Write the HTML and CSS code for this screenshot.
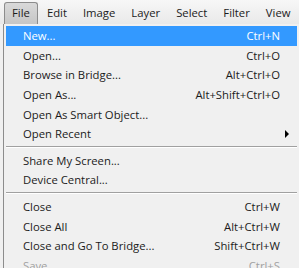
FILE: index.html
```html
<!DOCTYPE html>
<html lang="en">
<head>
    <meta charset="UTF-8">
    <title>File menu</title>
    <link rel="stylesheet" href="styles.css">
</head>
<body>
    <nav class="menubar">
        <span class="menu-title active">File</span>
        <span class="menu-title">Edit</span>
        <span class="menu-title">Image</span>
        <span class="menu-title">Layer</span>
        <span class="menu-title">Select</span>
        <span class="menu-title">Filter</span>
        <span class="menu-title">View</span>
    </nav>
    <ul class="dropdown">
        <li class="item selected"><span>New...</span><span class="key">Ctrl+N</span></li>
        <li class="item"><span>Open...</span><span class="key">Ctrl+O</span></li>
        <li class="item"><span>Browse in Bridge...</span><span class="key">Alt+Ctrl+O</span></li>
        <li class="item"><span>Open As...</span><span class="key">Alt+Shift+Ctrl+O</span></li>
        <li class="item"><span>Open As Smart Object...</span><span class="key"></span></li>
        <li class="item submenu"><span>Open Recent</span><span class="key"></span></li>
        <li class="separator"></li>
        <li class="item"><span>Share My Screen...</span><span class="key"></span></li>
        <li class="item"><span>Device Central...</span><span class="key"></span></li>
        <li class="separator"></li>
        <li class="item"><span>Close</span><span class="key">Ctrl+W</span></li>
        <li class="item"><span>Close All</span><span class="key">Alt+Ctrl+W</span></li>
        <li class="item"><span>Close and Go To Bridge...</span><span class="key">Shift+Ctrl+W</span></li>
        <li class="item disabled"><span>Save</span><span class="key">Ctrl+S</span></li>
    </ul>
</body>
</html>
```
FILE: styles.css
```css
/* Old Windows-style application menu */
* {
    box-sizing: border-box;
    margin: 0;
    padding: 0;
}

body {
    font-family: 'Open Sans', 'Noto Sans', sans-serif;
    font-size: 11.3px;
    color: #1b1b1b;
    background: #f0f0f0;
    overflow: hidden;
}

.menubar {
    display: flex;
    height: 24px;
    padding-left: 4px;
    background: linear-gradient(#f7f7f7, #e9e9e9);
}

.menu-title {
    padding: 5px 7px 0;
    margin-right: 2px;
    color: #1b1b1b;
}

.menu-title.active {
    margin-top: 2px;
    padding-top: 2px;
    border: 1px solid #8c8c8c;
    border-bottom: none;
    border-radius: 3px 3px 0 0;
    background: linear-gradient(#d9d9d9, #c6c6c6);
}

.dropdown {
    list-style: none;
    margin-left: 3px;
    border-left: 1px solid #8c8c8c;
    padding: 2px 2px 0 2px;
    background: #f0f0f0;
}

.item {
    display: flex;
    justify-content: space-between;
    align-items: center;
    height: 19.6px;
    padding: 0 17px 0 17px;
    position: relative;
}

.item.selected {
    background: #3399ff;
    color: #ffffff;
}

.item.disabled {
    color: #a0a0a0;
}

.key {
    text-align: right;
}

/* small black triangle for submenus */
.submenu::after {
    content: '';
    position: absolute;
    right: 8px;
    top: 6px;
    border-left: 4px solid #000;
    border-top: 4px solid transparent;
    border-bottom: 4px solid transparent;
}

.separator {
    height: 2px;
    margin: 2px 0 3px 0;
    border-top: 1px solid #a0a0a0;
    border-bottom: 1px solid #ffffff;
}
```
